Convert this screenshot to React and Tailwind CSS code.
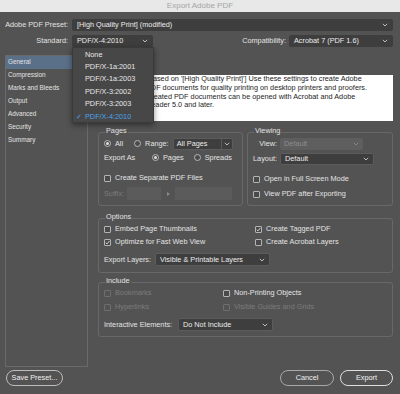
import React from "react";

const Chevron = ({ color = "#c9c9c9" }) => (
  <svg width="6" height="4" viewBox="0 0 6 4" className="shrink-0">
    <path d="M0.8 0.8 L3 3 L5.2 0.8" fill="none" stroke={color} strokeWidth="0.9" />
  </svg>
);

function Select({ className = "", disabled, children }) {
  return (
    <div
      className={`flex items-center justify-between px-[4px] rounded-[2px] ${
        disabled
          ? "bg-[#5e5e5e] text-[#8e8e8e]"
          : "bg-[#3e3e3e] border border-[#5c5c5c] text-[#ececec]"
      } ${className}`}
    >
      <span className="whitespace-nowrap">{children}</span>
      <Chevron color={disabled ? "#8a8a8a" : "#c9c9c9"} />
    </div>
  );
}

function Check({ checked, disabled, children, className = "" }) {
  return (
    <div className={`flex items-center h-[10px] ${className}`}>
      <span
        className={`w-[7px] h-[7px] shrink-0 rounded-[1px] border flex items-center justify-center ${
          disabled ? "border-[#6e6e6e]" : "border-[#b4b4b4] bg-[#4a4a4a]"
        }`}
      >
        {checked && (
          <svg width="5" height="5" viewBox="0 0 5 5">
            <path d="M0.7 2.6 L2 3.9 L4.4 0.9" fill="none" stroke="#dcdcdc" strokeWidth="0.9" />
          </svg>
        )}
      </span>
      <span className={`ml-[4px] whitespace-nowrap ${disabled ? "text-[#7c7c7c]" : ""}`}>
        {children}
      </span>
    </div>
  );
}

function Radio({ on, children, className = "" }) {
  return (
    <div className={`flex items-center ${className}`}>
      <span className="w-[7px] h-[7px] shrink-0 rounded-full border border-[#b8b8b8] bg-[#4a4a4a] flex items-center justify-center">
        {on && <span className="w-[3px] h-[3px] rounded-full bg-[#e2e2e2]" />}
      </span>
      <span className="ml-[4px] whitespace-nowrap">{children}</span>
    </div>
  );
}

function Group({ title, className = "", children }) {
  return (
    <fieldset className={`border border-[#686868] rounded-[3px] px-[5px] ${className}`}>
      <legend className="ml-[1px] px-[1px] leading-[8px] pb-[3px]">{title}</legend>
      {children}
    </fieldset>
  );
}

const sections = [
  "General",
  "Compression",
  "Marks and Bleeds",
  "Output",
  "Advanced",
  "Security",
  "Summary",
];

const standards = [
  "None",
  "PDF/X-1a:2001",
  "PDF/X-1a:2003",
  "PDF/X-3:2002",
  "PDF/X-3:2003",
  "PDF/X-4:2010",
];

export default function App() {
  return (
    <div className="relative w-[400px] h-[394px] overflow-hidden bg-[#535353] text-[#e3e3e3] text-[7.3px] leading-none font-['Liberation_Sans',Arial,sans-serif]">
      {/* title bar */}
      <div className="h-[12px] bg-[#e8e8e8] flex items-center justify-center text-[8px] text-[#a5a5a5]">
        Export Adobe PDF
      </div>

      {/* preset */}
      <div className="mt-[7px] flex items-center h-[12px]">
        <span className="w-[68px] text-right whitespace-nowrap">Adobe PDF Preset:</span>
        <Select className="ml-[4px] w-[321px] h-[12px] !border-[#3e3e3e]">
          [High Quality Print] (modified)
        </Select>
      </div>

      {/* standard / compatibility */}
      <div className="mt-[4px] flex items-center h-[12px]">
        <span className="w-[68px] text-right">Standard:</span>
        <Select className="ml-[4px] w-[81px] h-[12px] !border-[#3e3e3e]">PDF/X-4:2010</Select>
        <span className="ml-auto">Compatibility:</span>
        <Select className="ml-[3px] mr-[7px] w-[104px] h-[12px] !border-[#3e3e3e]">
          Acrobat 7 (PDF 1.6)
        </Select>
      </div>

      {/* body */}
      <div className="mt-[8px] flex h-[312px]">
        <div className="ml-[5px] w-[83px] border border-[#6a6a6a] text-[6.4px]">
          {sections.map((s, i) => (
            <div
              key={s}
              className={`h-[13px] flex items-center pl-[2px] ${i === 0 ? "bg-[#5a7089]" : ""}`}
            >
              {s}
            </div>
          ))}
        </div>

        <div className="ml-[10px] w-[295px] flex flex-col">
          {/* description */}
          <div className="mt-[20px] flex">
            <span className="w-[45px]" />
            <div className="flex-1 h-[46px] bg-white text-[#1e1e1e] pl-[3px] leading-[8.8px] whitespace-nowrap">
              [Based on '[High Quality Print]'] Use these settings to create Adobe
              <br />
              PDF documents for quality printing on desktop printers and proofers.
              <br />
              Created PDF documents can be opened with Acrobat and Adobe
              <br />
              Reader 5.0 and later.
            </div>
          </div>

          {/* pages + viewing */}
          <div className="mt-[6px] flex gap-[4px]">
            <Group title="Pages" className="w-[145px] pb-[5px]">
              <div className="h-[12px] flex items-center">
                <Radio on>All</Radio>
                <Radio className="ml-[11px]">Range:</Radio>
                <div className="ml-[4px] w-[60px] h-[12px] flex rounded-[2px] border border-[#5c5c5c] bg-[#3e3e3e]">
                  <span className="flex-1 flex items-center pl-[3px] text-[#ececec]">All Pages</span>
                  <span className="w-[11px] border-l border-[#5c5c5c] flex items-center justify-center">
                    <Chevron />
                  </span>
                </div>
              </div>
              <div className="mt-[2px] h-[12px] flex items-center">
                <span className="w-[48px]">Export As</span>
                <Radio on>Pages</Radio>
                <Radio className="ml-[10px]">Spreads</Radio>
              </div>
              <Check className="mt-[9px]">Create Separate PDF Files</Check>
              <div className="mt-[4px] h-[13px] flex items-center text-[#7c7c7c]">
                <span className="w-[23px]">Suffix:</span>
                <span className="w-[34px] h-[13px] bg-[#5b5b5b]" />
                <span className="ml-[6px] w-0 h-0 border-y-[2px] border-y-transparent border-l-[3px] border-l-[#8a8a8a]" />
                <span className="ml-[5px] w-[57px] h-[13px] bg-[#5b5b5b]" />
              </div>
            </Group>

            <Group title="Viewing" className="w-[146px] pb-[6px]">
              <div className="h-[12px] flex items-center">
                <span className="w-[24px] text-right text-[#e3e3e3]">View:</span>
                <Select disabled className="ml-[3px] w-[83px] h-[12px]">Default</Select>
              </div>
              <div className="mt-[3px] h-[12px] flex items-center">
                <span className="w-[24px] text-right">Layout:</span>
                <Select className="ml-[3px] w-[94px] h-[12px]">Default</Select>
              </div>
              <Check className="mt-[9px]">Open in Full Screen Mode</Check>
              <Check className="mt-[5px]">View PDF after Exporting</Check>
            </Group>
          </div>

          {/* options */}
          <Group title="Options" className="mt-[7px] pb-[6px]">
            <div className="flex">
              <Check className="w-[151px]">Embed Page Thumbnails</Check>
              <Check checked>Create Tagged PDF</Check>
            </div>
            <div className="mt-[3px] flex">
              <Check checked className="w-[151px]">Optimize for Fast Web View</Check>
              <Check>Create Acrobat Layers</Check>
            </div>
            <div className="mt-[6px] h-[13px] flex items-center">
              <span className="w-[51px]">Export Layers:</span>
              <Select className="w-[115px] h-[13px]">Visible &amp; Printable Layers</Select>
            </div>
          </Group>

          {/* include */}
          <Group title="Include" className="mt-[4px] pb-[5px]">
            <div className="flex">
              <Check disabled className="w-[119px]">Bookmarks</Check>
              <Check>Non-Printing Objects</Check>
            </div>
            <div className="mt-[4px] flex">
              <Check disabled className="w-[119px]">Hyperlinks</Check>
              <Check disabled>Visible Guides and Grids</Check>
            </div>
            <div className="mt-[6px] h-[13px] flex items-center">
              <span className="w-[74px]">Interactive Elements:</span>
              <Select className="w-[95px] h-[13px]">Do Not Include</Select>
            </div>
          </Group>
        </div>
      </div>

      {/* footer */}
      <div className="mt-[3px] h-[16px] flex items-center pl-[6px] pr-[7px]">
        <button className="w-[57px] h-[16px] rounded-full border border-[#bdbdbd] text-[#f0f0f0]">
          Save Preset...
        </button>
        <button className="ml-auto w-[54px] h-[16px] rounded-full border border-[#a8a8a8] text-[#f0f0f0]">
          Cancel
        </button>
        <button className="ml-[6px] w-[53px] h-[16px] rounded-full border-[1.5px] border-[#dedede] text-[#f4f4f4]">
          Export
        </button>
      </div>

      {/* open standard menu */}
      <div className="absolute top-[47px] left-[72px] w-[82px] bg-[#474747] border border-[#3a3a3a] shadow-[0_2px_6px_rgba(0,0,0,0.45)]">
        {standards.map((s) => {
          const sel = s === "PDF/X-4:2010";
          return (
            <div
              key={s}
              className={`h-[12.4px] flex items-center ${sel ? "text-[#4ba2ea]" : "text-[#e8e8e8]"}`}
            >
              <span className="w-[12px] pl-[3px] text-[7px]">{sel ? "✓" : ""}</span>
              <span>{s}</span>
            </div>
          );
        })}
      </div>
    </div>
  );
}
